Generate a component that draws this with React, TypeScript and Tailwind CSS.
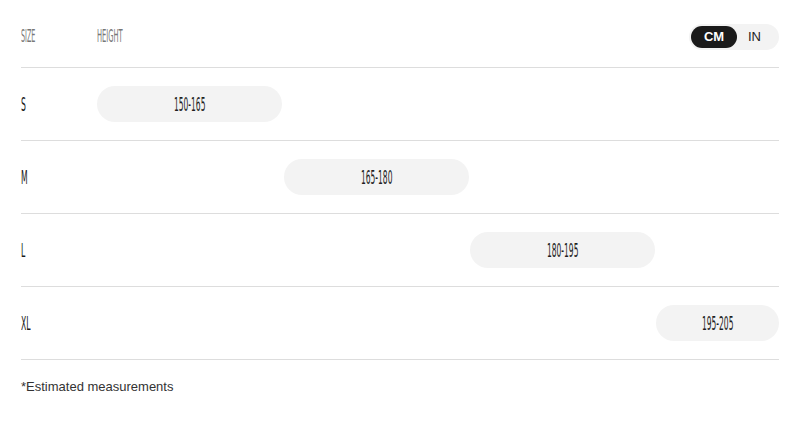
import React, { useState } from 'react'

type Row = {
  size: string
  range: string
  offset: string
}

const ROWS: Row[] = [
  { size: 'S', range: '150-165', offset: 'ml-0 w-[185px]' },
  { size: 'M', range: '165-180', offset: 'ml-[187px] w-[185px]' },
  { size: 'L', range: '180-195', offset: 'ml-[373px] w-[185px]' },
  { size: 'XL', range: '195-205', offset: 'ml-[559px] flex-1' },
]

const condensed = "font-['DejaVu_Sans_Condensed','Liberation_Sans_Narrow','Liberation_Sans',sans-serif]"

export default function App() {
  const [unit, setUnit] = useState<'CM' | 'IN'>('CM')

  return (
    <div className="w-[800px] h-[421px] bg-white px-[21px] font-['Liberation_Sans',Arial,sans-serif]">
      {/* header */}
      <div className="flex items-center h-[68px] pt-[7px] border-b border-[#dddddd]">
        <div className="w-[76px]">
          <span className={`inline-block text-[17px] text-[#777] scale-x-[0.42] origin-left ${condensed}`}>SIZE</span>
        </div>
        <div className="flex-1">
          <span className={`inline-block text-[17px] text-[#777] scale-x-[0.44] origin-left ${condensed}`}>HEIGHT</span>
        </div>
        <div className="flex items-center h-[26px] p-[2px] rounded-full bg-[#f3f3f3]">
          {(['CM', 'IN'] as const).map((u) => (
            <button
              key={u}
              onClick={() => setUnit(u)}
              className={
                unit === u
                  ? 'h-[22px] w-[46px] rounded-full bg-[#1a1a1a] text-white text-[13px] font-bold'
                  : 'h-[22px] w-[40px] pr-[5px] rounded-full text-[#222] text-[13px]'
              }
            >
              {u}
            </button>
          ))}
        </div>
      </div>

      {ROWS.map((r) => (
        <div key={r.size} className="flex items-center h-[73px] border-b border-[#dddddd]">
          <div className="w-[76px]">
            <span className={`inline-block text-[19px] text-[#1a1a1a] scale-x-[0.45] origin-left ${condensed}`}>{r.size}</span>
          </div>
          <div className="flex flex-1">
            <div className={`h-[36px] rounded-full bg-[#f3f3f3] flex items-center justify-center ${r.offset}`}>
              <span className={`inline-block text-[19px] text-[#1f1f1f] scale-x-[0.44] ${condensed}`}>{r.range}</span>
            </div>
          </div>
        </div>
      ))}

      <p className="mt-[17px] text-[13px] text-[#333]">*Estimated measurements</p>
    </div>
  )
}
